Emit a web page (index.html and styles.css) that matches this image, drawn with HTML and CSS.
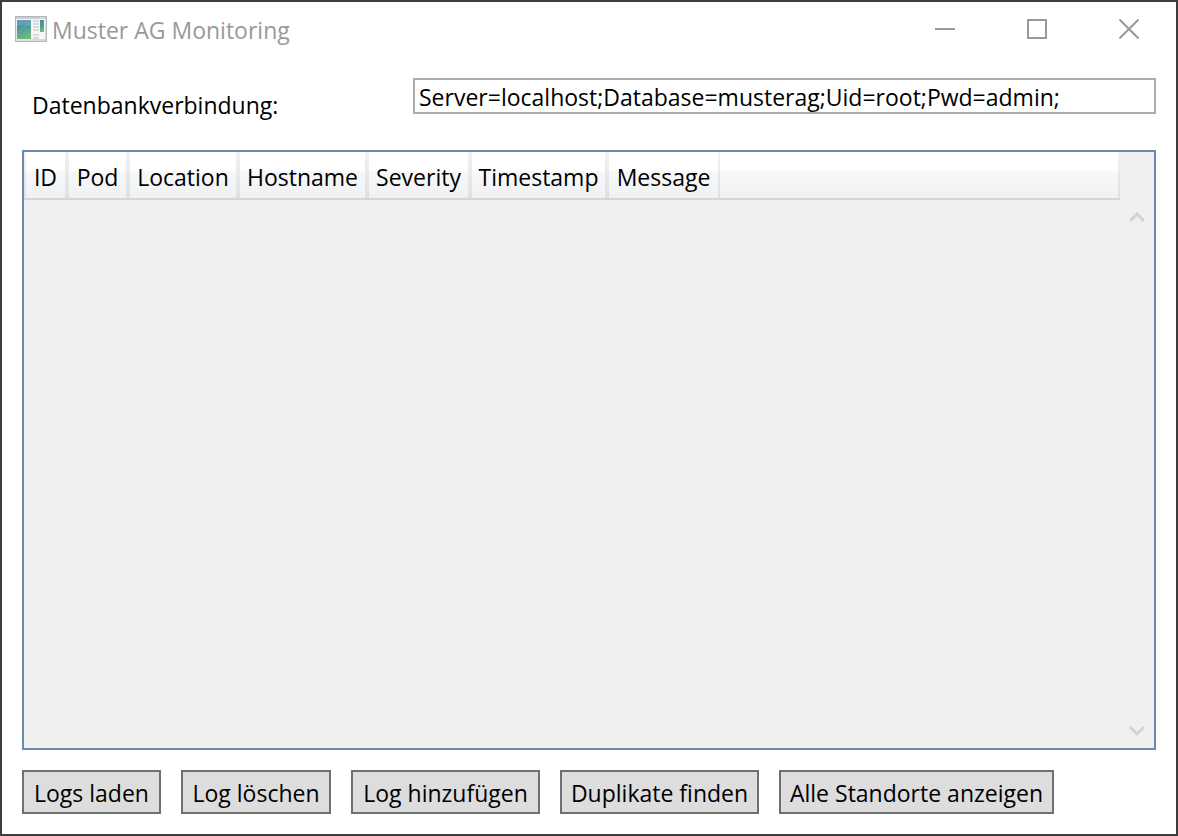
FILE: index.html
```html
<!DOCTYPE html>
<html lang="de">
<head>
<meta charset="utf-8">
<title>Muster AG Monitoring</title>
<link rel="stylesheet" href="styles.css">
</head>
<body>
<div class="window">
  <header class="titlebar">
    <svg class="app-icon" viewBox="0 0 32 26" aria-hidden="true">
      <defs>
        <linearGradient id="pane" x1="0" y1="0" x2="0.3" y2="1"><stop offset="0" stop-color="#4f87b5"/><stop offset="0.5" stop-color="#4c9a96"/><stop offset="1" stop-color="#6cba7c"/></linearGradient>
        <linearGradient id="frame" x1="0" y1="0" x2="1" y2="1"><stop offset="0" stop-color="#f2f3f5"/><stop offset="1" stop-color="#d3d5d8"/></linearGradient>
      </defs>
      <rect x="0.5" y="0.5" width="31" height="25" fill="url(#frame)" stroke="#b2b6ba"/>
      <rect x="1" y="1" width="30" height="2" fill="#c8cdd3"/>
      <path d="M25 2h1M27 2h1M29 2h1" stroke="#eef1f4"/>
      <rect x="2" y="3" width="28" height="20" fill="#f7f7f8"/>
      <rect x="2" y="4" width="14" height="19" fill="url(#pane)"/>
      <path d="M2 10Q10 8 16 10V4H2z" fill="#a8cce0" opacity="0.25"/>
      <path d="M2 20Q7 10 16 7" fill="none" stroke="#8cc8bc" opacity="0.5"/>
      <path d="M18 5h6M18 8h6M18 11h6M18 14h6M18 19h6M18 22h6" stroke="#cfd1d4" stroke-width="1.5"/>
      <rect x="25" y="4" width="4" height="12" fill="url(#pane)"/>
    </svg>
    <h1 class="title">Muster AG Monitoring</h1>
    <div class="window-controls">
      <button class="window-button" type="button" aria-label="Minimieren"><svg viewBox="0 0 20 20"><path d="M0 10h20"/></svg></button>
      <button class="window-button" type="button" aria-label="Maximieren"><svg viewBox="0 0 20 20"><path d="M1 1h18v18H1z"/></svg></button>
      <button class="window-button" type="button" aria-label="Schließen"><svg viewBox="0 0 20 20"><path d="M0.5 0.5l19 19M19.5 0.5l-19 19"/></svg></button>
    </div>
  </header>
  <main class="content">
    <div class="connection">
      <label class="connection-label" for="connection">Datenbankverbindung:</label>
      <input class="connection-input" id="connection" type="text" value="Server=localhost;Database=musterag;Uid=root;Pwd=admin;">
    </div>
    <div class="grid">
      <table class="log-table">
        <thead>
          <tr>
            <th class="col-id" scope="col">ID</th>
            <th class="col-pod" scope="col">Pod</th>
            <th class="col-location" scope="col">Location</th>
            <th class="col-hostname" scope="col">Hostname</th>
            <th class="col-severity" scope="col">Severity</th>
            <th class="col-timestamp" scope="col">Timestamp</th>
            <th class="col-message" scope="col">Message</th>
            <td class="col-rest"></td>
          </tr>
        </thead>
        <tbody></tbody>
      </table>
      <div class="scrollbar">
        <button class="scroll-button" type="button" aria-label="Nach oben"><svg viewBox="0 0 16 10"><path d="M1 9l7-7 7 7"/></svg></button>
        <button class="scroll-button" type="button" aria-label="Nach unten"><svg viewBox="0 0 16 10"><path d="M1 1l7 7 7-7"/></svg></button>
      </div>
    </div>
    <div class="actions">
      <button class="action action-load" type="button">Logs laden</button>
      <button class="action action-delete" type="button">Log löschen</button>
      <button class="action action-add" type="button">Log hinzufügen</button>
      <button class="action action-duplicates" type="button">Duplikate finden</button>
      <button class="action action-sites" type="button">Alle Standorte anzeigen</button>
    </div>
  </main>
</div>
</body>
</html>
```
FILE: styles.css
```css
* {
  box-sizing: border-box;
}

body {
  margin: 0;
  background: #fff;
  color: #000;
  font-family: "Open Sans", "Noto Sans", sans-serif;
  font-size: 23px;
  line-height: 32px;
}

button,
input {
  font: inherit;
  color: inherit;
}

.window {
  display: flex;
  flex-direction: column;
  min-height: 100vh;
  border: 2px solid #3e3c3e;
}

.titlebar {
  display: flex;
  align-items: center;
  height: 54px;
  padding-left: 13px;
  color: #999;
}

.app-icon {
  width: 32px;
  height: 26px;
  margin-right: 5px;
}

.title {
  margin: 0;
  padding-top: 2px;
  font-size: 23px;
  font-weight: 400;
}

.window-controls {
  display: flex;
  margin-left: auto;
  padding-right: 1px;
}

.window-button {
  width: 92px;
  height: 54px;
  padding: 0;
  border: 0;
  background: none;
}

.window-button svg {
  display: block;
  width: 20px;
  height: 20px;
  margin: 0 auto;
  fill: none;
  stroke: #999;
  stroke-width: 2;
}

.content {
  display: flex;
  flex: 1;
  flex-direction: column;
  padding: 22px 20px 20px;
}

.connection {
  display: flex;
  align-items: flex-start;
  margin-bottom: 36px;
}

.connection-label {
  width: 391px;
  height: 36px;
  padding: 11px 10px 0;
}

.connection-input {
  flex: 1;
  min-width: 0;
  height: 36px;
  padding: 2px 4px 0;
  border: 2px solid #abadb3;
  border-radius: 0;
  background: #fff;
}

.grid {
  display: flex;
  flex: 1;
  align-items: flex-start;
  border: 2px solid #688caf;
  background: #f0f0f0;
}

.log-table {
  flex: 1;
  table-layout: fixed;
  border-collapse: separate;
  border-spacing: 0;
}

.log-table th,
.log-table td {
  height: 48px;
  padding: 4px 0 0;
  border-bottom: 2px solid #d5d5d5;
  background:
    linear-gradient(#f2f2f2, #dedfe1) right / 2px 100% no-repeat,
    linear-gradient(#fff 0 41%, #f7f8fa 41%, #f0f1f3);
  font-weight: 400;
}

.log-table th {
  background:
    linear-gradient(#f2f2f2, #dedfe1) left / 2px 100% no-repeat,
    linear-gradient(#f2f2f2, #dedfe1) right / 2px 100% no-repeat,
    linear-gradient(#fff 0 41%, #f7f8fa 41%, #f0f1f3);
}

.col-id { width: 43px; }
.col-pod { width: 61px; }
.col-location { width: 110px; }
.col-hostname { width: 129px; }
.col-severity { width: 103px; }
.col-timestamp { width: 137px; }
.col-message { width: 113px; }

.scrollbar {
  display: flex;
  flex-direction: column;
  justify-content: space-between;
  align-self: stretch;
  width: 34px;
  padding-top: 48px;
}

.scroll-button {
  width: 34px;
  height: 34px;
  padding: 0;
  border: 0;
  background: none;
}

.scroll-button svg {
  display: block;
  width: 16px;
  height: 10px;
  margin: 0 auto;
  fill: none;
  stroke: #d3d3d3;
  stroke-width: 3;
}

.actions {
  display: flex;
  gap: 20px;
  margin-top: 20px;
}

.action {
  height: 44px;
  padding: 2px 0 0;
  border: 2px solid #707070;
  border-radius: 0;
  background: #ddd;
  white-space: nowrap;
}

.action-load { width: 139px; }
.action-delete { width: 150px; }
.action-add { width: 189px; }
.action-duplicates { width: 199px; }
.action-sites { width: 275px; }
```
